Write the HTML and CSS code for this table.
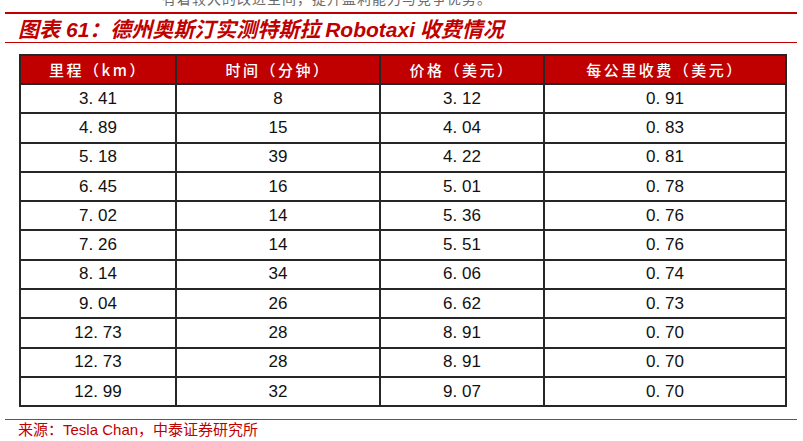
FILE: index.html
```html
<!DOCTYPE html>
<html lang="zh">
<head>
<meta charset="utf-8">
<link rel="stylesheet" href="styles.css">
</head>
<body>
<div class="page">
  <div class="clip"><div class="clip-text">有着较大的改进空间，提升盈利能力与竞争优势。</div></div>
  <div class="rule-thick"></div>
  <h1 class="title">图表<span class="num">61</span>：德州奥斯汀实测特斯拉 <span class="lat">Robotaxi</span> 收费情况</h1>
  <div class="rule-thin"></div>
  <div class="table-wrap">
    <table class="data">
      <colgroup>
        <col class="c1"><col class="c2"><col class="c3"><col class="c4">
      </colgroup>
      <thead>
        <tr><th>里程（km）</th><th>时间（分钟）</th><th>价格（美元）</th><th>每公里收费（美元）</th></tr>
      </thead>
      <tbody>
        <tr><td>3. 41</td><td>8</td><td>3. 12</td><td>0. 91</td></tr>
        <tr><td>4. 89</td><td>15</td><td>4. 04</td><td>0. 83</td></tr>
        <tr><td>5. 18</td><td>39</td><td>4. 22</td><td>0. 81</td></tr>
        <tr><td>6. 45</td><td>16</td><td>5. 01</td><td>0. 78</td></tr>
        <tr><td>7. 02</td><td>14</td><td>5. 36</td><td>0. 76</td></tr>
        <tr><td>7. 26</td><td>14</td><td>5. 51</td><td>0. 76</td></tr>
        <tr><td>8. 14</td><td>34</td><td>6. 06</td><td>0. 74</td></tr>
        <tr><td>9. 04</td><td>26</td><td>6. 62</td><td>0. 73</td></tr>
        <tr><td>12. 73</td><td>28</td><td>8. 91</td><td>0. 70</td></tr>
        <tr><td>12. 73</td><td>28</td><td>8. 91</td><td>0. 70</td></tr>
        <tr><td>12. 99</td><td>32</td><td>9. 07</td><td>0. 70</td></tr>
      </tbody>
    </table>
  </div>
  <div class="rule-foot"></div>
  <p class="source">来源：<span class="lat-src">Tesla Chan</span>，中泰证券研究所</p>
</div>
</body>
</html>
```
FILE: styles.css
```css
html, body {
  margin: 0;
  padding: 0;
  background: #ffffff;
}
.page {
  width: 803px;
  height: 441px;
  overflow: hidden;
  padding: 0 6px 0 5px;
  box-sizing: border-box;
}
.clip {
  height: 8px;
  overflow: hidden;
  padding-left: 157px;
}
.clip-text {
  font-family: "Noto Sans CJK SC", sans-serif;
  font-size: 14px;
  line-height: 16px;
  margin-top: -10px;
  color: #6a6a6a;
  letter-spacing: 1px;
  white-space: nowrap;
}
.rule-thick {
  margin-top: 4px;
  height: 2px;
  background: #c00000;
}
.title {
  margin: 0;
  height: 28px;
  padding-left: 13px;
  font-family: "Noto Sans CJK SC", sans-serif;
  font-size: 21px;
  line-height: 28px;
  font-weight: 700;
  font-style: italic;
  color: #c00000;
  white-space: nowrap;
}
.title .num {
  font-family: "Liberation Sans", Arial, sans-serif;
  margin-left: 6px;
}
.title .lat {
  font-family: "Liberation Sans", Arial, sans-serif;
  font-size: 21px;
}
.rule-thin {
  height: 1px;
  background: #c00000;
}
.table-wrap {
  padding-left: 14px;
  margin-top: 11px;
}
.data {
  border-collapse: collapse;
  width: 766px;
  table-layout: fixed;
}
.c1 { width: 156px; }
.c2 { width: 204px; }
.c3 { width: 164px; }
.c4 { width: 242px; }
.data th, .data td {
  border: 2px solid #262626;
  text-align: center;
  padding: 0;
}
.data th {
  background: #c00000;
  color: #ffffff;
  height: 27px;
  font-family: "Noto Sans CJK SC", sans-serif;
  font-size: 15px;
  font-weight: 500;
  letter-spacing: 2.5px;
}
.data td {
  height: 27.3px;
  font-family: "Liberation Sans", Arial, sans-serif;
  font-size: 17px;
  color: #111111;
}
.rule-foot {
  margin-top: 12px;
  height: 1px;
  background: #e02020;
}
.source {
  margin: 0 0 0 13px;
  font-family: "Noto Sans CJK SC", sans-serif;
  font-size: 15px;
  line-height: 18px;
  color: #c00000;
  white-space: nowrap;
}
.lat-src {
  font-family: "Liberation Sans", Arial, sans-serif;
  font-size: 15px;
}
```
